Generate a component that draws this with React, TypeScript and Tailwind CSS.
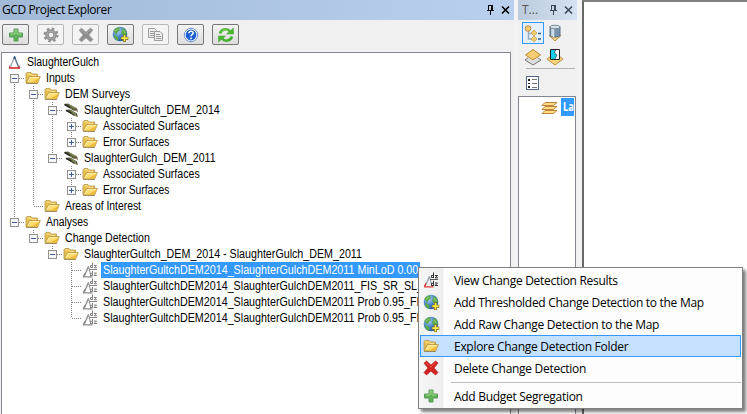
import React from "react";

type Guide = "none" | "line" | "tee" | "end" | "minus" | "minusEnd" | "minusTop" | "plus" | "plusEnd";
type IconKind = "folder" | "survey" | "delta" | "root";

function FolderIcon() {
  return (
    <svg width="16" height="16" viewBox="0 0 16 16" className="block shrink-0">
      <path d="M1 12.500V3.500L2 2.500h4L7.500 4H12.500V12z" fill="#e9c04d" stroke="#b4944e" strokeWidth=".8" />
      <path d="M2 4h3.500l1.500 1.500h4" fill="none" stroke="#fbe596" />
      <path d="M1 13L4.500 6.500H15.300L12.500 13.300z" fill="#fcdb6c" stroke="#b58f42" strokeWidth=".8" />
      <path d="M3.200 11.500L5.300 7.600H13.800" fill="none" stroke="#fff2ae" />
      <path d="M6 12.800L14.300 7.800 12.200 12.800z" fill="#efbc3a" />
      <path d="M1.200 13.400h11.500" stroke="#8b7446" strokeWidth=".8" />
    </svg>
  );
}

function SurveyIcon() {
  return (
    <svg width="16" height="16" viewBox="0 0 16 16" className="block shrink-0">
      <path d="M1 2L5 1.500 14 6.500 15 9.500 10 8.500z" fill="#55553b" />
      <path d="M3 8L7 7.500 14 11.500 15 15 10 13.500z" fill="#55553b" />
      <path d="M6 3l6 3.500M7.500 9l5.500 3.500" stroke="#76894c" strokeWidth="1.500" />
      <path d="M1.500 2.500l5.500 3M3 8.300l5.500 3" stroke="#292a24" strokeWidth="1.600" />
      <path d="M11.500 7.800l3.500 1.500M11.500 13l3.500 1.700" stroke="#a2906b" />
    </svg>
  );
}

function DeltaIcon({ color = false }: { color?: boolean }) {
  return (
    <svg width="16" height="18" viewBox="0 0 16 18" className="block shrink-0">
      <path d="M6.500 5.500L2 15.500" stroke={color ? "#9aa2ae" : "#8c8c8c"} strokeWidth="1.400" />
      <path d="M6.500 5.500L9 15.500" stroke={color ? "#9aa2ae" : "#999"} strokeWidth="1.200" />
      <path d="M1 15.800h9.500M1.500 15.500l1.500-3.500" stroke={color ? "#e03c36" : "#8b8b8b"} strokeWidth="1.300" />
      <path d="M7 8.500h8" stroke={color ? "#555" : "#888"} strokeWidth="1" />
      <g fill="none" stroke={color ? "#333" : "#858585"} strokeWidth="1">
        <path d="M10.500 1.500v5.500M10.500 4.500H8.500v2h2M12 4.500h2.500L12 6.800h3M10.500 9.800v5M10.500 12.300H8.500v2.200h2M12 12h2.500L12 14.500h3" />
      </g>
    </svg>
  );
}

function RootIcon() {
  return (
    <svg width="14" height="16" viewBox="0 0 14 16" className="block shrink-0">
      <path d="M6.500 3L2 14" stroke="#9aa4b3" strokeWidth="1.300" />
      <path d="M6.500 3L11 14" stroke="#65758a" strokeWidth="1.500" />
      <path d="M5.800 5l.7-3 .9 3" stroke="#31588d" fill="#31588d" />
      <path d="M1 14h11" stroke="#df2525" strokeWidth="1.600" />
      <path d="M2 11.500L1 14M11 11.500l1 2.500" stroke="#c55" />
    </svg>
  );
}

function GlobeIcon() {
  return (
    <svg width="17" height="17" viewBox="0 0 17 17" className="block shrink-0">
      <defs>
        <radialGradient id="sea" cx=".35" cy=".3" r=".75">
          <stop offset="0" stopColor="#b5d6f4" />
          <stop offset=".55" stopColor="#4583cb" />
          <stop offset="1" stopColor="#2658a4" />
        </radialGradient>
      </defs>
      <circle cx="8" cy="8" r="7.300" fill="url(#sea)" />
      <path d="M1.500 4.800C3 2 5.500 .9 8 1.200L7 3 8 4.500 5.500 6 5 8 3 7.500zM2 9l3 1 1.500 2L6 15C3.500 14 2 12 2 9zM10 2l3.500 1.500L15 8l-2.500 2L10 8.500 9 6l1.500-1.500z" fill="#5bab49" />
      <path d="M3 5l3-2M11 4l2 3" stroke="#9ad16e" />
      <path d="M12.500 8.500v7.500M8.800 12.200h7.500" stroke="#776315" strokeWidth="3" />
      <path d="M12.500 9v6.500M9.300 12.200h6.500" stroke="#ffe94a" strokeWidth="1.700" />
    </svg>
  );
}

function PlusIcon() {
  return (
    <svg width="16" height="16" viewBox="0 0 16 16" className="block shrink-0">
      <path d="M6 2h4v4h4.500v4H10v4H6v-4H1.500V6H6z" fill="#5fb257" stroke="#5a9a58" />
      <path d="M2.500 7h4.500V3h2v4h4.500" fill="none" stroke="#9bd48b" />
    </svg>
  );
}

function GearIcon() {
  return (
    <svg width="16" height="16" viewBox="0 0 16 16">
      <circle cx="8" cy="8" r="6.200" fill="none" stroke="#929292" strokeWidth="2.600" strokeDasharray="2.435 2.435" />
      <circle cx="8" cy="8" r="4" fill="none" stroke="#929292" strokeWidth="3.600" />
      <circle cx="8" cy="8" r="4" fill="none" stroke="#acacac" />
    </svg>
  );
}

function CrossIcon({ red = false }: { red?: boolean }) {
  return (
    <svg width="16" height="16" viewBox="0 0 16 16" className="block shrink-0">
      <path d="M1 3.200L3.500 1 8 5 12.500 1 15 3 11 8l4 4.500-2.500 2.500L8 11l-4.500 4L1 12.500 5 8z" fill={red ? "#d42323" : "#8e8e8e"} stroke={red ? "#b72020" : "#aaa"} strokeWidth=".7" />
      <path d="M3 3l5 4 4-4" fill="none" stroke={red ? "#ee5a50" : "#a5a5a5"} />
    </svg>
  );
}

function CopyIcon() {
  return (
    <svg width="16" height="16" viewBox="0 0 16 16">
      <path d="M.5 1.500h6l2 2v7h-8z" fill="#ededed" stroke="#9d9d9d" />
      <path d="M2 4.500h4M2 6.500h5M2 8.500h4" stroke="#999" />
      <path d="M6.500 4.500h5.500l2.500 2.500v6.500h-8z" fill="#ededed" stroke="#9d9d9d" />
      <path d="M8 7.500h4M8 9.500h5M8 11.500h5" stroke="#999" />
    </svg>
  );
}

function HelpIcon() {
  return (
    <svg width="16" height="16" viewBox="0 0 16 16">
      <circle cx="8" cy="8" r="6.700" fill="#fff" stroke="#6b93de" strokeWidth="1" />
      <circle cx="8" cy="8" r="5.400" fill="#1c60d1" />
      <path d="M5.800 6.200C6 3.500 10.500 3.700 10.200 6.200 10 7.800 8 7.500 8 9.300M8 10.500v1.700" fill="none" stroke="#fff" strokeWidth="1.500" />
    </svg>
  );
}

function RefreshIcon() {
  return (
    <svg width="18" height="16" viewBox="0 0 18 16">
      <path d="M3 6.500C4.500 1.800 10 1 13 4.500M15 9.500c-1.500 4.700-7 5.500-10 2" fill="none" stroke="#45b030" strokeWidth="2.600" />
      <path d="M9.500 7h7V1zM8.500 9h-7v6z" fill="#4dbb31" stroke="#399b2a" strokeWidth=".5" />
      <path d="M4 5.500C6 2.500 9 2.200 11.500 4" fill="none" stroke="#99df70" />
    </svg>
  );
}

function PinClose({ pale = false }: { pale?: boolean }) {
  const c = pale ? "#3e4855" : "#000";
  return (
    <svg width="24" height="12" viewBox="0 0 24 12" className="block shrink-0">
      <path d="M2.500 1.500h4v5h-4zM1 6.500h7M4.500 7v4M5.500 1v5" fill="none" stroke={c} shapeRendering="crispEdges" />
      <path d="M16 2.500l7 7M23 2.500l-7 7" stroke={c} strokeWidth="1.600" />
    </svg>
  );
}

function GuideCell({ kind }: { kind: Guide }) {
  const box = kind.startsWith("plus") || kind.startsWith("minus");
  const up = kind !== "none" && kind !== "minusTop";
  const down = ["line", "tee", "minus", "minusTop", "plus"].includes(kind);
  return (
    <svg width="19" height="16" viewBox="0 0 19 16" className="block shrink-0" shapeRendering="crispEdges">
      <g stroke="#808080" strokeDasharray="1 1">
        {up && <path d="M9.500 0v8" />}
        {down && <path d="M9.500 8v8" />}
        {kind !== "none" && kind !== "line" && <path d="M10 8.500h9" />}
      </g>
      {box && (
        <>
          <rect x="5.500" y="4.500" width="8" height="8" fill="#f7f7f7" stroke="#919191" />
          <path d="M7 8.500h5" stroke="#3b5b9c" />
          {kind.startsWith("plus") && <path d="M9.500 6v5" stroke="#3b5b9c" />}
        </>
      )}
    </svg>
  );
}

const rows: { guides: Guide[]; icon: IconKind; text: string; scale: string; selected?: boolean }[] = [
  { guides: [], icon: "root", text: "SlaughterGulch", scale: "scale-x-[0.872]" },
  { guides: ["minusTop"], icon: "folder", text: "Inputs", scale: "scale-x-[0.884]" },
  { guides: ["line", "minus"], icon: "folder", text: "DEM Surveys", scale: "scale-x-[0.887]" },
  { guides: ["line", "line", "minus"], icon: "survey", text: "SlaughterGultch_DEM_2014", scale: "scale-x-[0.889]" },
  { guides: ["line", "line", "line", "plus"], icon: "folder", text: "Associated Surfaces", scale: "scale-x-[0.884]" },
  { guides: ["line", "line", "line", "plusEnd"], icon: "folder", text: "Error Surfaces", scale: "scale-x-[0.857]" },
  { guides: ["line", "line", "minusEnd"], icon: "survey", text: "SlaughterGulch_DEM_2011", scale: "scale-x-[0.886]" },
  { guides: ["line", "line", "none", "plus"], icon: "folder", text: "Associated Surfaces", scale: "scale-x-[0.884]" },
  { guides: ["line", "line", "none", "plusEnd"], icon: "folder", text: "Error Surfaces", scale: "scale-x-[0.857]" },
  { guides: ["line", "end"], icon: "folder", text: "Areas of Interest", scale: "scale-x-[0.863]" },
  { guides: ["minusEnd"], icon: "folder", text: "Analyses", scale: "scale-x-[0.868]" },
  { guides: ["none", "minusEnd"], icon: "folder", text: "Change Detection", scale: "scale-x-[0.883]" },
  { guides: ["none", "none", "minusEnd"], icon: "folder", text: "SlaughterGultch_DEM_2014 - SlaughterGulch_DEM_2011", scale: "scale-x-[0.891]" },
  { guides: ["none", "none", "none", "tee"], icon: "delta", text: "SlaughterGultchDEM2014_SlaughterGulchDEM2011 MinLoD 0.00", scale: "scale-x-[0.894]", selected: true },
  { guides: ["none", "none", "none", "tee"], icon: "delta", text: "SlaughterGultchDEM2014_SlaughterGulchDEM2011_FIS_SR_SL_", scale: "scale-x-[0.894]" },
  { guides: ["none", "none", "none", "tee"], icon: "delta", text: "SlaughterGultchDEM2014_SlaughterGulchDEM2011 Prob 0.95_FI", scale: "scale-x-[0.894]" },
  { guides: ["none", "none", "none", "end"], icon: "delta", text: "SlaughterGultchDEM2014_SlaughterGulchDEM2011 Prob 0.95_FI", scale: "scale-x-[0.894]" },
];

const treeIcons: Record<IconKind, React.ReactNode> = {
  folder: <FolderIcon />,
  survey: <SurveyIcon />,
  delta: <DeltaIcon />,
  root: <RootIcon />,
};

const tools = [
  { icon: <PlusIcon />, on: true },
  { icon: <GearIcon />, on: false },
  { icon: <CrossIcon />, on: false },
  { icon: <GlobeIcon />, on: true },
  { icon: <CopyIcon />, on: false },
  { icon: <HelpIcon />, on: true },
  { icon: <RefreshIcon />, on: true },
];

function Explorer() {
  return (
    <section className="flex h-full w-[514px] shrink-0 flex-col bg-[#f0f0f0]">
      <header className="flex h-5 shrink-0 items-center justify-between bg-linear-to-r from-[#a1bad8] to-[#b9d1ef] pr-[4px] pl-[2px]">
        <span className="font-['Open_Sans','Noto_Sans',sans-serif] text-[12px] leading-5 tracking-[-0.4px] whitespace-nowrap text-black">GCD Project Explorer</span>
        <PinClose />
      </header>
      <div className="flex h-8 shrink-0 gap-2 pt-1 pl-[2px]">
        {tools.map((t, i) => (
          <button key={i} className={`flex h-[21px] w-[27px] items-center justify-center rounded-[2px] border ${t.on ? "border-[#777] bg-linear-to-b from-[#f3f3f3] to-[#dddddd]" : "border-[#b4b8b8] bg-[#f4f4f4]"}`}>
            {t.icon}
          </button>
        ))}
      </div>
      <div className="mr-[3px] ml-px flex min-h-0 flex-1 flex-col overflow-hidden border border-b-0 border-[#828790] bg-white pt-px">
        {rows.map((r, i) => (
          <div key={i} className="flex h-4 shrink-0 items-center pl-[3px]">
            {r.guides.map((g, j) => <GuideCell key={j} kind={g} />)}
            <div className={`flex shrink-0 justify-center ${r.icon === "root" ? "ml-px w-[17px]" : "w-[18px]"}`}>{treeIcons[r.icon]}</div>
            <div className={`ml-[2px] h-4 pl-[2px] font-['Liberation_Sans',Arial,sans-serif] text-[12px] leading-4 whitespace-nowrap ${r.selected ? "w-[319px] bg-[#3399ff] text-white" : "text-black"}`}>
              <span className={`inline-block origin-left ${r.scale}`}>{r.text}</span>
            </div>
          </div>
        ))}
      </div>
    </section>
  );
}

function Contents() {
  return (
    <section className="ml-1 flex h-full w-[59px] shrink-0 flex-col bg-[#f0f0f0]">
      <header className="flex h-5 shrink-0 items-center justify-between bg-linear-to-r from-[#bccbdc] to-[#d4e2f3] pr-[4px] pl-[4px]">
        <span className="font-['Open_Sans','Noto_Sans',sans-serif] text-[12px] leading-5 text-[#555]">T...</span>
        <PinClose pale />
      </header>
      <div className="mt-[2px] flex h-[22px] items-center pl-1">
        <div className="flex h-[22px] w-[22px] items-center justify-center border border-[#3399ff] bg-[#e3effb]">
          <svg width="18" height="18" viewBox="0 0 18 18">
            <path d="M4.500 7v8H10M5 9.500h5" fill="none" stroke="#9aabc0" strokeWidth="1.500" />
            <circle cx="4" cy="4.500" r="2.800" fill="#f5ce72" stroke="#b88c3e" />
            <path d="M7 9l3-3 3 3-3 3zM7 15l3-3 3 3-3 3z" fill="#f5cb70" stroke="#c69846" strokeWidth=".7" />
            <path d="M14 9.500h3M14 15h3" stroke="#31638b" strokeWidth="1.300" />
          </svg>
        </div>
        <svg width="16" height="20" viewBox="0 0 16 20" className="ml-[3px]">
          <path d="M2 12.500h12l-6 5.500z" fill="#f8d57c" stroke="#b98f43" />
          <path d="M3 3.500v9c0 2 10 2 10 0v-9z" fill="#7893ae" stroke="#5d7084" />
          <path d="M5 5v8M6.500 5v9" stroke="#cfdeea" strokeWidth="1.500" />
          <ellipse cx="8" cy="4" rx="5" ry="1.800" fill="#d8e0e8" stroke="#76889c" />
        </svg>
      </div>
      <div className="flex h-[24px] shrink-0 items-center pt-[2px] pl-[6px]">
        <svg width="18" height="18" viewBox="0 0 18 18">
          <path d="M1 12l8-6 8 6-8 5z" fill="#ddd" stroke="#777" />
          <path d="M1 7.500l8-6 8 6-8 5.500z" fill="#fff" />
          <path d="M1.500 7l7.500-5.500L16.500 7 9 12z" fill="#f5cc72" stroke="#b9892d" />
        </svg>
        <svg width="18" height="18" viewBox="0 0 18 18" className="ml-[4px]">
          <path d="M1 11l4-3h8l4 3-8 6z" fill="#f8d57c" stroke="#b98f43" />
          <path d="M4.500 1.500h9v10h-9z" fill="#fff" stroke="#222" />
          <path d="M5 2h4.500l-1 3 2.500 2-2 4H5z" fill="#16cee6" />
          <path d="M9.500 2l-1 3 2.500 2-2 4" fill="none" stroke="#333" strokeWidth=".7" />
        </svg>
      </div>
      <div className="ml-2 w-[49px] border-t border-[#b5b5b5]" />
      <svg width="13" height="14" viewBox="0 0 13 14" className="mt-[7px] ml-[8px] shrink-0" shapeRendering="crispEdges">
        <path d="M.5.500h12v13H.5z" fill="#fff" stroke="#556a87" />
        <path d="M2 3h2v2H2zM2 6.500h2v1H2zM2 10h2v2H2z" fill="#222" />
        <path d="M6 3.500h5M6 7.500h5M6 11.500h5" stroke="#777" />
      </svg>
      <div className="mt-[6px] mr-px flex min-h-0 flex-1 items-start overflow-hidden border border-b-0 border-[#828790] bg-white pt-px">
        <svg width="17" height="14" viewBox="0 0 17 14" className="mt-[3px] ml-[22px] shrink-0">
          <g fill="#ffdc82" stroke="#b5782e" strokeWidth=".9">
            <path d="M1 12.500L4 9.500h12l-3.500 3zM1 8.500l3-3h12l-3.500 3zM1 4.500l3-3h12l-3.500 3z" />
          </g>
        </svg>
        <div className="ml-[3px] h-[18px] w-[13px] shrink-0 bg-[#3399ff] pl-[2px] font-['Open_Sans','Noto_Sans',sans-serif] text-[12px] leading-[18px] font-bold text-white">
          <span className="inline-block origin-left scale-x-[0.78]">La</span>
        </div>
      </div>
    </section>
  );
}

const menu = [
  { icon: <DeltaIcon color />, text: "View Change Detection Results" },
  { icon: <GlobeIcon />, text: "Add Thresholded Change Detection to the Map" },
  { icon: <GlobeIcon />, text: "Add Raw Change Detection to the Map" },
  { icon: <FolderIcon />, text: "Explore Change Detection Folder", active: true },
  { icon: <CrossIcon red />, text: "Delete Change Detection" },
  { icon: <PlusIcon />, text: "Add Budget Segregation", divider: true },
];

function ContextMenu() {
  return (
    <div className="absolute top-[267px] left-[418px] h-[142px] w-[325px] border border-[#808080] bg-linear-to-r from-[#f6f6f6] from-0% via-[#eeeeee] via-[24px] to-[#fdfdfd] to-[25px] p-px shadow-[3px_3px_3px_rgba(0,0,0,0.5)]">
      {menu.map((m) => (
        <React.Fragment key={m.text}>
          {m.divider && <div className="mt-[3px] mb-[2px] ml-[31px] border-t border-[#bdbdbd]" />}
          <div className={`flex h-[22px] items-center border pl-px ${m.active ? "border-[#3399ff] bg-[#c4e1ff]" : "border-transparent"}`}>
            <span className="flex w-[18px] justify-center">{m.icon}</span>
            <span className="ml-[14px] pt-px font-['Open_Sans','Noto_Sans',sans-serif] text-[12px] leading-5 tracking-[-0.29px] whitespace-nowrap text-black">{m.text}</span>
          </div>
        </React.Fragment>
      ))}
    </div>
  );
}

export default function App() {
  return (
    <main className="relative flex h-[414px] w-[747px] overflow-hidden bg-[#f3f3f3]">
      <Explorer />
      <Contents />
      <section className="ml-[5px] flex-1 border-t-2 border-l-2 border-t-[#808080] border-l-[#696969] bg-white" />
      <ContextMenu />
    </main>
  );
}
